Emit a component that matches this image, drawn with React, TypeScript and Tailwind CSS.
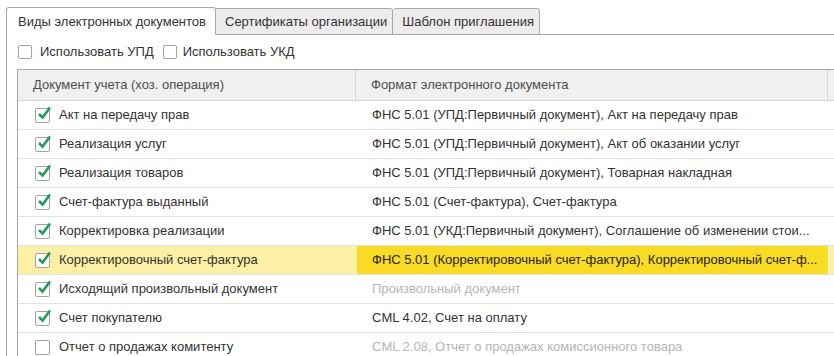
import React from "react";

const Box = ({ checked, size = 15 }: { checked?: boolean; size?: number }) => (
  <span
    className={
      "relative inline-block shrink-0 rounded-[2px] border border-[#a3a3a3] bg-white " +
      (size === 15 ? "w-[15px] h-[15px]" : "w-[14px] h-[14px]")
    }
  >
    {checked && (
      <svg
        className="absolute left-[1px] top-[-4px]"
        width="15"
        height="16"
        viewBox="0 0 15 16"
        fill="none"
      >
        <path
          d="M2 9 L5.6 12.6 L13 2.4"
          stroke="#1f9e55"
          strokeWidth="2.6"
          strokeLinecap="butt"
          strokeLinejoin="miter"
        />
      </svg>
    )}
  </span>
);

type Row = {
  doc: string;
  fmt: string;
  checked: boolean;
  gray?: boolean;
  active?: boolean;
};

const rows: Row[] = [
  { doc: "Акт на передачу прав", fmt: "ФНС 5.01 (УПД:Первичный документ), Акт на передачу прав", checked: true },
  { doc: "Реализация услуг", fmt: "ФНС 5.01 (УПД:Первичный документ), Акт об оказании услуг", checked: true },
  { doc: "Реализация товаров", fmt: "ФНС 5.01 (УПД:Первичный документ), Товарная накладная", checked: true },
  { doc: "Счет-фактура выданный", fmt: "ФНС 5.01 (Счет-фактура), Счет-фактура", checked: true },
  { doc: "Корректировка реализации", fmt: "ФНС 5.01 (УКД:Первичный документ), Соглашение об изменении стои...", checked: true },
  { doc: "Корректировочный счет-фактура", fmt: "ФНС 5.01 (Корректировочный счет-фактура), Корректировочный счет-ф...", checked: true, active: true },
  { doc: "Исходящий произвольный документ", fmt: "Произвольный документ", checked: true, gray: true },
  { doc: "Счет покупателю", fmt: "CML 4.02, Счет на оплату", checked: true },
  { doc: "Отчет о продажах комитенту", fmt: "CML 2.08, Отчет о продажах комиссионного товара", checked: false, gray: true },
];

export default function App() {
  return (
    <div
      className="w-[834px] h-[356px] overflow-hidden bg-white text-[13px] text-[#333333] flex flex-col"
      style={{ fontFamily: '"Liberation Sans", Arial, sans-serif' }}
    >
      {/* Tabs */}
      <div className="flex items-end pl-[6px] pt-[7px] shrink-0">
        <div className="h-[28px] pl-[11px] pr-[9px] flex items-center bg-white border border-b-0 border-[#a9a9a9] rounded-t-[3px] text-[#333]">
          Виды электронных документов
        </div>
        <div className="h-[27px] pl-[9px] pr-[5px] flex items-center bg-[#ececec] border-t border-r border-b border-[#a9a9a9] rounded-tr-[3px] text-[#333]">
          Сертификаты организации
        </div>
        <div className="h-[27px] pl-[9px] pr-[5px] flex items-center bg-[#ececec] border-t border-r border-b border-[#a9a9a9] rounded-t-[3px] text-[#333]">
          Шаблон приглашения
        </div>
        <div className="flex-1 border-b border-[#a9a9a9]" />
      </div>

      {/* Panel */}
      <div className="ml-[6px] flex-1 border-l border-[#a9a9a9] pl-[10px] flex flex-col min-h-0">
        <div className="flex items-center h-[16px] mt-[9px] pl-[1px]">
          <Box size={14} />
          <span className="ml-[8px]">Использовать УПД</span>
          <span className="ml-[9px] flex"><Box size={14} /></span>
          <span className="ml-[6px]">Использовать УКД</span>
        </div>

        <div className="mt-[9px] border-t border-l border-[#a9a9a9] flex-1 min-h-0">
          {/* Header */}
          <div className="flex h-[31px] bg-[#f0f0f0] border-b border-[#d6d6d6] text-[#4d4d4d]">
            <div className="w-[338px] shrink-0 border-r border-[#d6d6d6] pl-[15px] flex items-center">
              Документ учета (хоз. операция)
            </div>
            <div className="w-[472px] shrink-0 border-r border-[#d6d6d6] pl-[15px] flex items-center">
              Формат электронного документа
            </div>
            <div className="flex-1" />
          </div>

          {rows.map((r, i) => (
            <div
              key={i}
              className={
                "flex h-[29px] border-b border-[#e2e2e2] " +
                (r.active ? "bg-[#fbf0a3]" : "bg-white")
              }
            >
              <div className="w-[339px] shrink-0 flex items-center pl-[17px]">
                <Box checked={r.checked} />
                <span className="ml-[9px] whitespace-nowrap">{r.doc}</span>
              </div>
              <div
                className={
                  "w-[471px] shrink-0 flex items-center pl-[15px] whitespace-nowrap overflow-hidden " +
                  (r.active ? "bg-[#f9dc22] text-[#222]" : "") +
                  (r.gray ? " text-[#b5b5b5]" : "")
                }
              >
                {r.fmt}
              </div>
              <div className={"w-[1px] shrink-0 " + (r.active ? "bg-white" : "")} />
              <div className="flex-1" />
            </div>
          ))}
        </div>
      </div>
    </div>
  );
}
